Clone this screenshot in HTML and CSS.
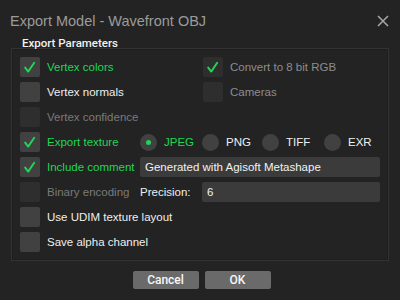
FILE: index.html
```html
<!DOCTYPE html>
<html>
<head>
<meta charset="utf-8">
<link rel="stylesheet" href="styles.css">
</head>
<body>
<div class="dialog">
  <div class="titlebar">
    <span class="title">Export Model - Wavefront OBJ</span>
    <svg class="close" width="12" height="12" viewBox="0 0 12 12"><path d="M1 1L11 11M11 1L1 11" stroke="#a8a8a8" stroke-width="1.5" fill="none"/></svg>
  </div>
  <div class="legend">Export Parameters</div>
  <div class="group">
    <div class="row">
      <div class="left"><span class="cb"><svg class="tick" viewBox="0 0 20 20"><path d="M5.2 10.6L8.2 14.6L14.2 5.8"/></svg></span><span class="lbl green">Vertex colors</span></div>
      <div class="col2"><span class="cb dis"><svg class="tick" viewBox="0 0 20 20"><path d="M5.2 10.6L8.2 14.6L14.2 5.8"/></svg></span><span class="lbl gray">Convert to 8 bit RGB</span></div>
    </div>
    <div class="row">
      <div class="left"><span class="cb"></span><span class="lbl">Vertex normals</span></div>
      <div class="col2"><span class="cb dis"></span><span class="lbl gray">Cameras</span></div>
    </div>
    <div class="row">
      <div class="left"><span class="cb dis"></span><span class="lbl gray">Vertex confidence</span></div>
    </div>
    <div class="row">
      <div class="left"><span class="cb"><svg class="tick" viewBox="0 0 20 20"><path d="M5.2 10.6L8.2 14.6L14.2 5.8"/></svg></span><span class="lbl green">Export texture</span></div>
      <div class="radios">
        <div class="ropt w62"><span class="radio on"></span><span class="rlbl green">JPEG</span></div>
        <div class="ropt w60"><span class="radio"></span><span class="rlbl">PNG</span></div>
        <div class="ropt w62"><span class="radio"></span><span class="rlbl">TIFF</span></div>
        <div class="ropt"><span class="radio"></span><span class="rlbl">EXR</span></div>
      </div>
    </div>
    <div class="row">
      <div class="left"><span class="cb"><svg class="tick" viewBox="0 0 20 20"><path d="M5.2 10.6L8.2 14.6L14.2 5.8"/></svg></span><span class="lbl green">Include comment</span></div>
      <div class="input wide">Generated with Agisoft Metashape</div>
    </div>
    <div class="row">
      <div class="left"><span class="cb dis"></span><span class="lbl gray">Binary encoding</span></div>
      <span class="plbl">Precision:</span>
      <div class="input prec">6</div>
    </div>
    <div class="row">
      <div class="left"><span class="cb"></span><span class="lbl">Use UDIM texture layout</span></div>
    </div>
    <div class="row">
      <div class="left"><span class="cb"></span><span class="lbl">Save alpha channel</span></div>
    </div>
  </div>
  <div class="buttons">
    <button class="btn">Cancel</button>
    <button class="btn">OK</button>
  </div>
</div>
</body>
</html>
```
FILE: styles.css
```css
html, body {
  margin: 0;
  padding: 0;
  background: #232323;
  width: 400px;
  height: 300px;
  overflow: hidden;
  font-family: "Liberation Sans", Arial, sans-serif;
}
.dialog {
  padding: 0 11px 0 11px;
}
.titlebar {
  height: 38px;
  display: flex;
  align-items: center;
  justify-content: space-between;
  padding-top: 3px;
  box-sizing: border-box;
}
.title {
  margin-left: -1px;
  font-size: 14.5px;
  color: #9b9b9b;
}
.legend {
  margin-left: 11px;
  font-family: Roboto, "Liberation Sans", sans-serif;
  font-size: 11.5px;
  font-weight: 500;
  color: #f2f2f2;
  height: 10px;
  line-height: 10px;
}
.group {
  border: 1px solid #333333;
  box-shadow: inset 0 0 0 1px #1d1d1d;
  padding: 8px 8px 9px 8px;
  height: 213px;
  box-sizing: border-box;
}
.row {
  display: flex;
  align-items: center;
  height: 20px;
  margin-bottom: 5px;
}
.left {
  width: 120px;
  flex: none;
  display: flex;
  align-items: center;
}
.col2 {
  margin-left: 63px;
  display: flex;
  align-items: center;
}
.cb {
  width: 20px;
  height: 20px;
  flex: none;
  background: #414141;
  border-radius: 2px;
  margin-right: 7px;
  display: flex;
}
.cb.dis {
  background: #2e2e2e;
}
.tick {
  width: 20px;
  height: 20px;
}
.tick path {
  fill: none;
  stroke: #1fd656;
  stroke-width: 1.9;
  stroke-linecap: round;
  stroke-linejoin: round;
}
.lbl {
  font-size: 11.5px;
  color: #efefef;
  white-space: nowrap;
}
.green {
  color: #1fd656 !important;
}
.gray {
  color: #7a7a7a;
}
.col2 .gray {
  color: #8d8d8d;
}
.radios {
  display: flex;
  align-items: center;
}
.ropt {
  display: flex;
  align-items: center;
}
.w62 { width: 62px; }
.w60 { width: 60px; }
.radio {
  width: 17px;
  height: 17px;
  border-radius: 50%;
  background: #414141;
  position: relative;
  margin-right: 7px;
}
.radio.on::after {
  content: "";
  position: absolute;
  left: 6px;
  top: 6px;
  width: 5px;
  height: 5px;
  border-radius: 50%;
  background: #1fd656;
}
.rlbl {
  font-size: 11.5px;
  color: #efefef;
}
.input {
  height: 20px;
  background: #3b3b3b;
  border-radius: 2px;
  color: #f2f2f2;
  font-size: 11.5px;
  line-height: 20px;
  padding-left: 5px;
  box-sizing: border-box;
}
.input.wide {
  width: 240px;
}
.plbl {
  font-size: 11.5px;
  color: #efefef;
  width: 62px;
}
.input.prec {
  width: 178px;
}
.buttons {
  display: flex;
  justify-content: center;
  gap: 6px;
  margin-top: 10px;
  margin-left: 3px;
}
.btn {
  width: 66px;
  height: 18px;
  border: none;
  border-radius: 2px;
  background: #6a6a6a;
  color: #f6f6f6;
  font-family: Roboto, "Liberation Sans", Arial, sans-serif;
  font-weight: 500;
  font-size: 12px;
  padding: 0;
}
```
